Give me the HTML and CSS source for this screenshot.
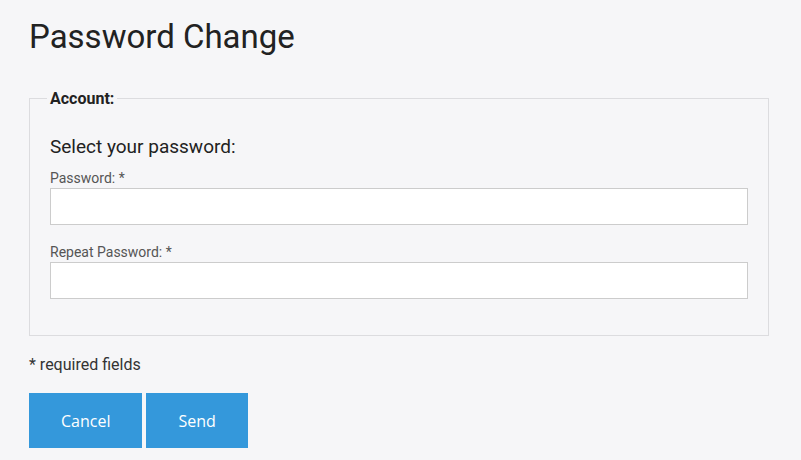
FILE: index.html
```html
<!DOCTYPE html>
<html>
<head>
<meta charset="utf-8">
<link rel="stylesheet" href="styles.css">
</head>
<body>
<div class="page">
  <h1 class="title">Password Change</h1>
  <form class="form">
    <fieldset class="box">
      <legend class="legend">Account:</legend>
      <p class="intro">Select your password:</p>
      <label class="label" for="pw1">Password: *</label>
      <input class="field" id="pw1" type="password">
      <label class="label" for="pw2">Repeat Password: *</label>
      <input class="field" id="pw2" type="password">
    </fieldset>
    <p class="note">* required fields</p>
    <div class="actions">
      <button class="btn" type="button">Cancel</button>
      <button class="btn" type="submit">Send</button>
    </div>
  </form>
</div>
</body>
</html>
```

FILE: styles.css
```css
html, body {
  margin: 0;
  padding: 0;
  background: #f6f6f8;
}
body {
  font-family: Roboto, "Liberation Sans", sans-serif;
  color: #222;
}
.page {
  padding: 18px 32px 0 29px;
}
.title {
  margin: 0 0 34px;
  font-size: 33px;
  font-weight: 400;
  line-height: 37.5px;
  color: #222;
}
.form {
  margin: 0;
}
.box {
  margin: 0;
  border: 1px solid #dcdcdf;
  padding: 0 20px 36px;
  min-width: 0;
}
.legend {
  margin-left: -3px;
  padding: 0 3px;
  font-size: 16px;
  font-weight: 700;
  line-height: 18.75px;
  color: #222;
}
.intro {
  margin: 28px 0 13px;
  font-size: 19px;
  line-height: 21px;
  color: #222;
}
.label {
  display: block;
  margin-bottom: 2px;
  font-size: 14px;
  line-height: 16px;
  color: #555;
}
.field {
  display: block;
  box-sizing: border-box;
  width: 100%;
  height: 37px;
  margin: 0 0 19px;
  border: 1px solid #cccccc;
  background: #fff;
  padding: 0 8px;
}
.field:last-child {
  margin-bottom: 0;
}
.note {
  margin: 20px 0 18px;
  font-size: 16px;
  line-height: 18.75px;
  color: #333;
}
.actions {
  display: flex;
  gap: 4px;
}
.btn {
  height: 55px;
  padding: 0 32px;
  border: 0;
  background: #3498db;
  color: #fff;
  font-family: "Open Sans", "Noto Sans", sans-serif;
  font-size: 16px;
}
```
